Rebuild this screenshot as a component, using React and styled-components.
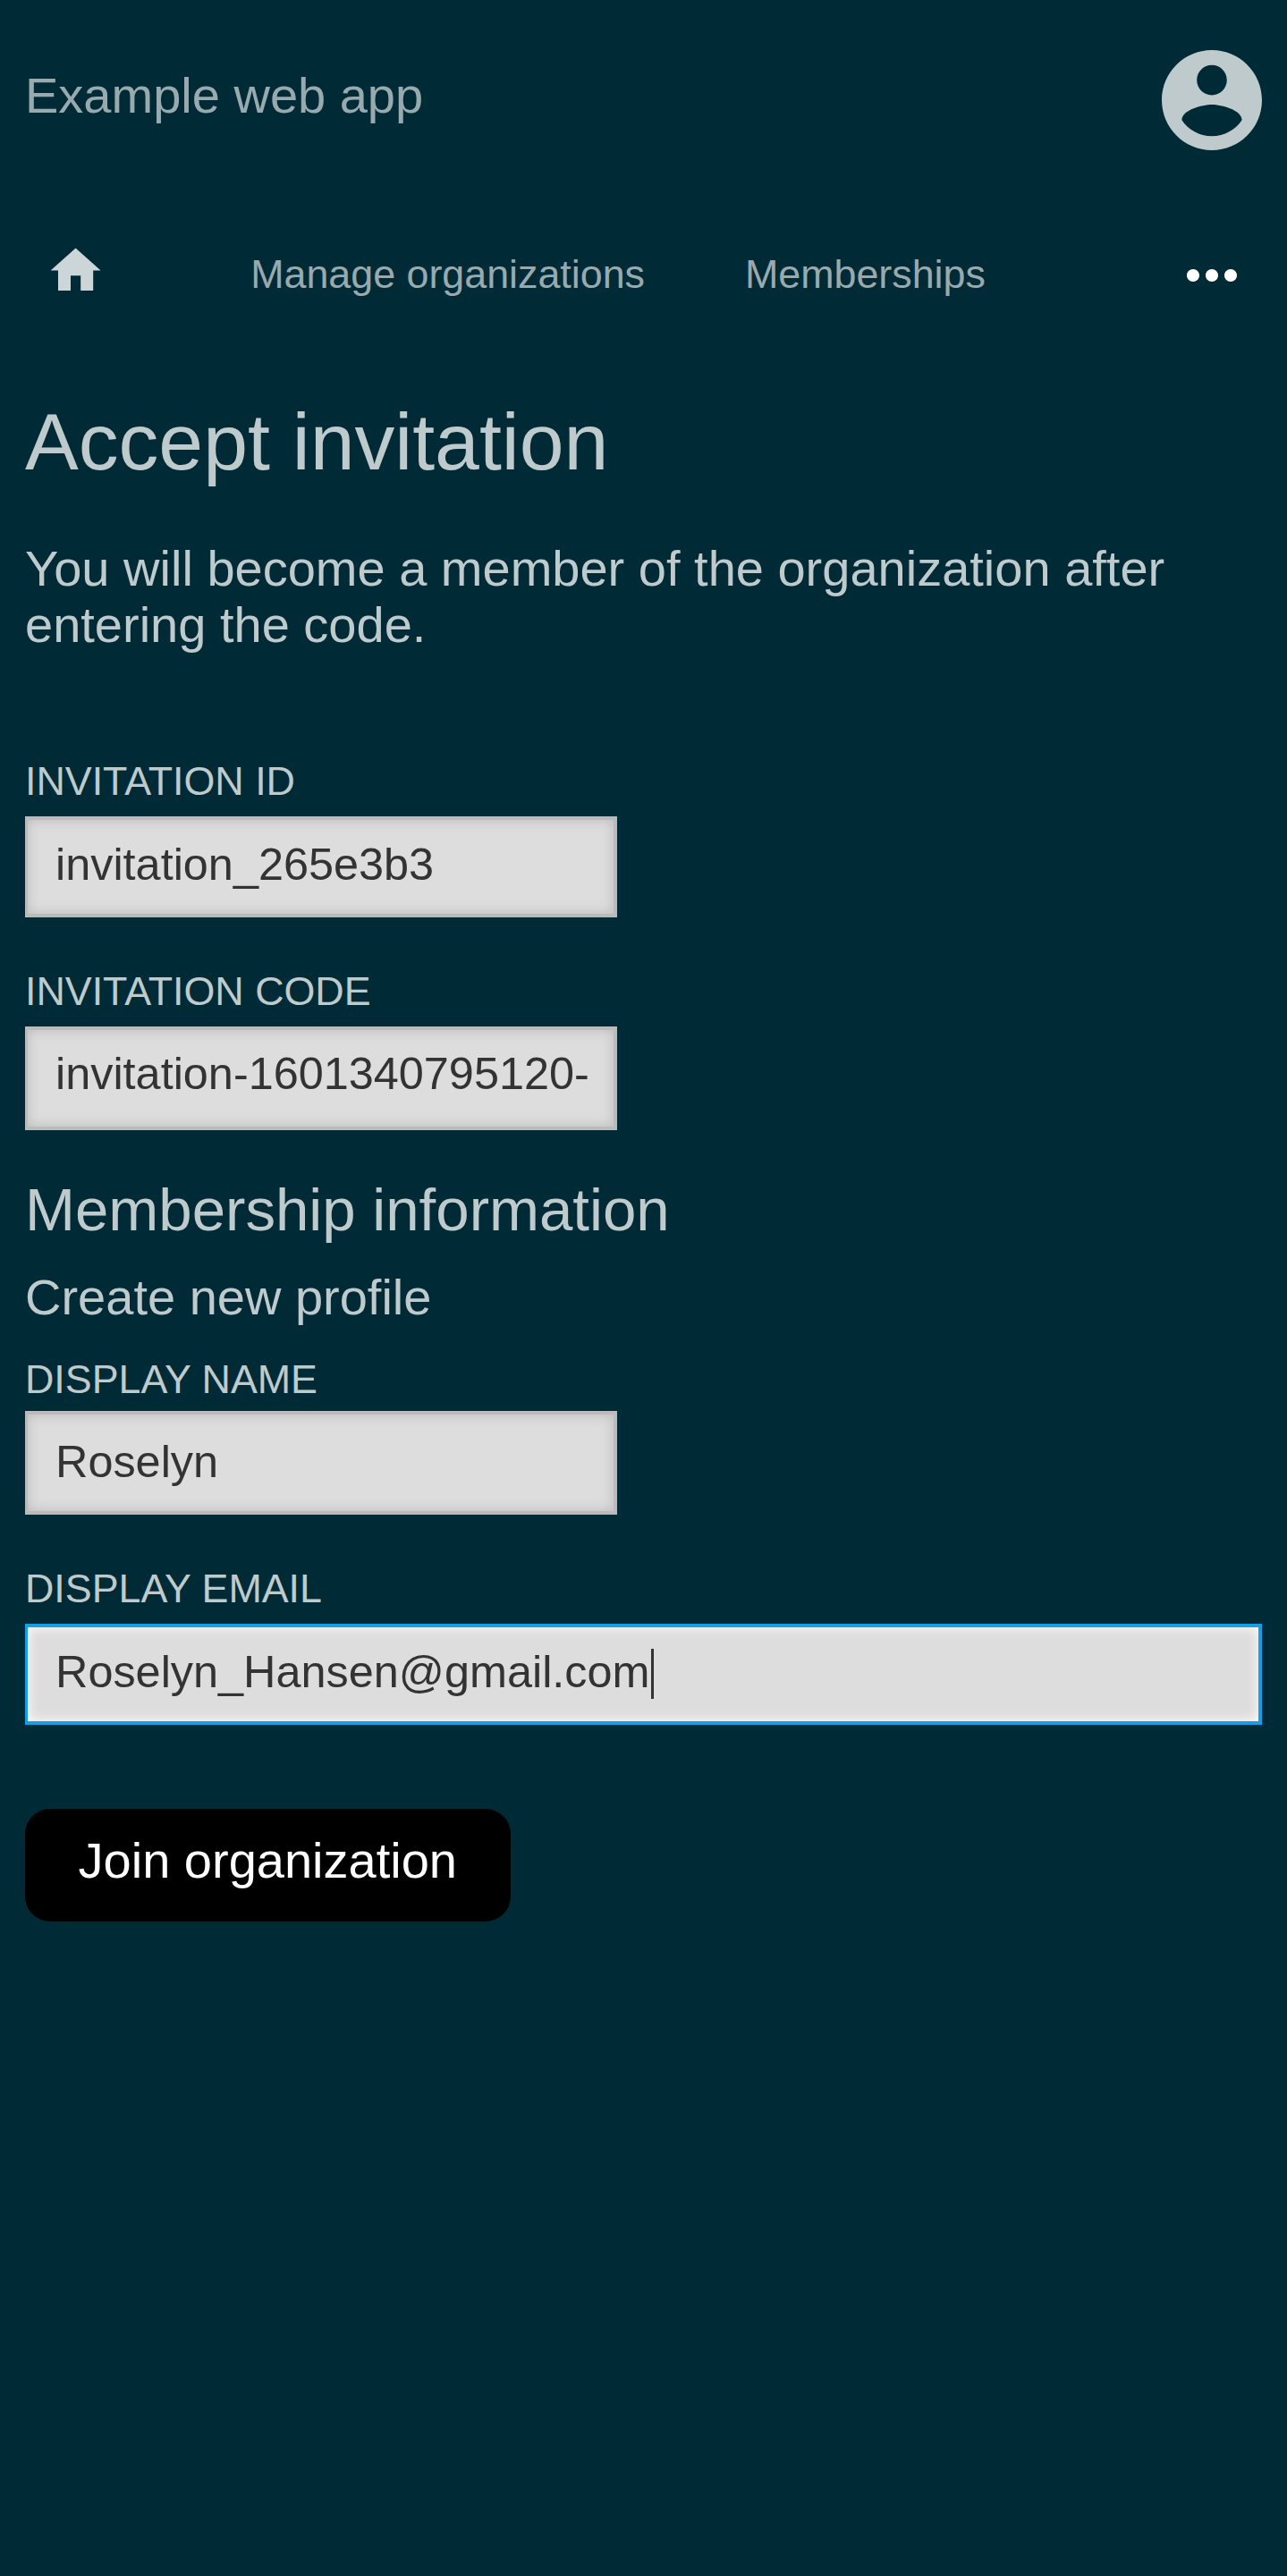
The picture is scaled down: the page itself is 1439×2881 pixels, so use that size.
import React from "react";
import styled, { createGlobalStyle } from "styled-components";

const GlobalStyle = createGlobalStyle`
  * { box-sizing: border-box; }
  body {
    margin: 0;
    background: #002b36;
    font-family: "Liberation Sans", Arial, sans-serif;
  }
`;

const Page = styled.div`
  display: flex;
  flex-direction: column;
  min-height: 2881px;
  padding: 56px 28px 0;
  background: #002b36;
  color: #bfcacd;
  font-size: 56px;
  line-height: 63px;
`;

const Header = styled.header`
  display: flex;
  justify-content: space-between;
  height: 112px;
`;

const AppName = styled.a`
  margin-top: 19px;
  color: #99aaaf;
`;

const Avatar = styled.svg`
  display: block;
  width: 112px;
  height: 112px;
  fill: #bfcacd;
`;

const Nav = styled.nav`
  display: flex;
  align-items: flex-start;
  height: 84px;
  margin-top: 98px;
  padding: 0 14px 0 22.6px;
`;

const HomeIcon = styled.svg`
  width: 67.2px;
  height: 67.2px;
  margin-top: 3px;
  fill: #ccd5d7;
`;

const NavLink = styled.a`
  margin: 15px 0 0 ${(p) => p.$gap}px;
  color: #99aaaf;
  font-size: 44.8px;
  line-height: 51px;
`;

const MoreIcon = styled.svg`
  width: 84px;
  height: 84px;
  margin-left: auto;
  fill: #fff;
`;

const Title = styled.h1`
  margin: 94px 0 60px;
  font-size: 89.6px;
  font-weight: 400;
  line-height: 100px;
`;

const Intro = styled.p`
  margin: 0 0 118px;
`;

const SectionTitle = styled.h2`
  margin: 51px 0 29px;
  font-size: 67.2px;
  font-weight: 400;
  line-height: 75px;
`;

const SubTitle = styled.h3`
  margin: 0 0 35px;
  font-size: 56px;
  font-weight: 400;
  line-height: 63px;
`;

const Field = styled.div`
  display: flex;
  flex-direction: column;
  gap: ${(p) => p.$gap ?? 14}px;
  & + & { margin-top: 57px; }
`;

const FieldGroup = styled.section`
  display: flex;
  flex-direction: column;
`;

const Label = styled.label`
  font-size: 44.8px;
  line-height: 51px;
  text-transform: uppercase;
`;

const TextBox = styled.div`
  display: flex;
  width: ${(p) => (p.$wide ? "100%" : "662px")};
  height: ${(p) => p.$height}px;
  padding: ${(p) => p.$top}px 26px 0 31px;
  overflow: hidden;
  border: solid ${(p) => (p.$focused ? "#169fe6" : "#bbb")};
  border-width: 4px 4px 4px 3px;
  background: #ddd;
  box-shadow: inset 0 0 14px ${(p) => (p.$focused ? "#fff" : "#bbb")};
  color: #333;
  font-size: 50.4px;
  line-height: 57px;
  white-space: nowrap;
`;

const Caret = styled.span`
  width: 3px;
  height: 56px;
  margin: 3px 0 0 1px;
  background: #333;
`;

const SubmitButton = styled.button`
  align-self: flex-start;
  width: 542.5px;
  height: 126px;
  margin-top: 94px;
  padding: 0 0 11px;
  border: 0;
  border-radius: 28px;
  background: #000;
  color: #fff;
  font: inherit;
`;

function TextField({ label, value, gap, height, top, wide, focused }) {
  return (
    <Field $gap={gap}>
      <Label>{label}</Label>
      <TextBox $height={height} $top={top} $wide={wide} $focused={focused}>
        {value}
        {focused && <Caret />}
      </TextBox>
    </Field>
  );
}

export default function App() {
  return (
    <>
      <GlobalStyle />
      <Page>
        <Header>
          <AppName>Example web app</AppName>
          <Avatar viewBox="2 2 20 20">
            <path d="M12 2C6.48 2 2 6.48 2 12s4.48 10 10 10 10-4.48 10-10S17.52 2 12 2zm0 3c1.66 0 3 1.34 3 3s-1.34 3-3 3-3-1.34-3-3 1.34-3 3-3zm0 14.2c-2.5 0-4.71-1.28-6-3.22.03-1.99 4-3.08 6-3.08 1.99 0 5.97 1.09 6 3.08-1.29 1.94-3.5 3.22-6 3.22z" />
          </Avatar>
        </Header>
        <Nav>
          <HomeIcon viewBox="0 0 24 24">
            <path d="M10 20v-6h4v6h5v-8h3L12 3 2 12h3v8z" />
          </HomeIcon>
          <NavLink $gap={162.4}>Manage organizations</NavLink>
          <NavLink $gap={112}>Memberships</NavLink>
          <MoreIcon viewBox="0 0 24 24">
            <path d="M6 10c-1.100 0-2 .9-2 2s.9 2 2 2 2-.9 2-2-.9-2-2-2zm12 0c-1.100 0-2 .9-2 2s.9 2 2 2 2-.9 2-2-.9-2-2-2zm-6 0c-1.100 0-2 .9-2 2s.9 2 2 2 2-.9 2-2-.9-2-2-2z" />
          </MoreIcon>
        </Nav>
        <Title>Accept invitation</Title>
        <Intro>You will become a member of the organization after entering the code.</Intro>
        <TextField label="Invitation ID" value="invitation_265e3b3" height={113} top={21} />
        <TextField label="Invitation code" value="invitation-1601340795120-" height={116} top={20} />
        <SectionTitle>Membership information</SectionTitle>
        <SubTitle>Create new profile</SubTitle>
        <FieldGroup>
          <TextField label="Display name" value="Roselyn" gap={10} height={116} top={24} />
          <TextField label="Display email" value="Roselyn_Hansen@gmail.com" height={113} top={21} wide focused />
        </FieldGroup>
        <SubmitButton>Join organization</SubmitButton>
      </Page>
    </>
  );
}
